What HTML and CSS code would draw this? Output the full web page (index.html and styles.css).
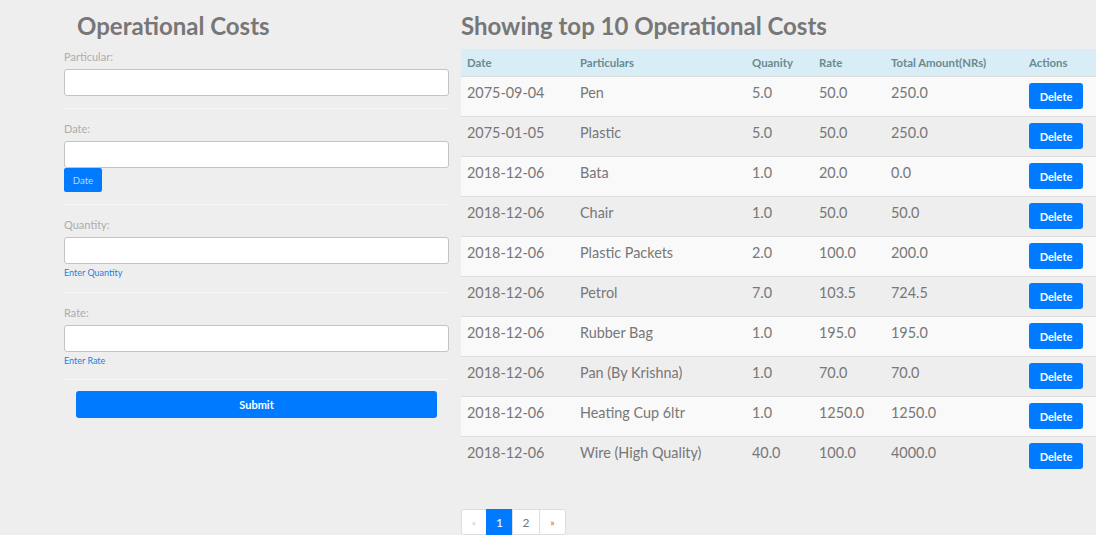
FILE: index.html
```html
<!DOCTYPE html>
<html>
<head>
<meta charset="utf-8">
<link rel="stylesheet" href="styles.css">
</head>
<body>
<div class="page">
  <section class="form-col">
    <h2 class="title title-left">Operational Costs</h2>
    <div class="group first">
      <label class="lbl">Particular:</label>
      <input class="field" type="text">
    </div>
    <hr class="sep">
    <div class="group">
      <label class="lbl">Date:</label>
      <input class="field" type="text">
      <button class="btn-date">Date</button>
    </div>
    <hr class="sep">
    <div class="group">
      <label class="lbl">Quantity:</label>
      <input class="field" type="text">
      <div class="help">Enter Quantity</div>
    </div>
    <hr class="sep after-help">
    <div class="group">
      <label class="lbl">Rate:</label>
      <input class="field" type="text">
      <div class="help">Enter Rate</div>
    </div>
    <hr class="sep">
    <button class="btn-submit">Submit</button>
  </section>
  <section class="table-col">
    <h2 class="title">Showing top 10 Operational Costs</h2>
    <table class="costs">
      <colgroup>
        <col class="c1"><col class="c2"><col class="c3"><col class="c4"><col class="c5"><col class="c6">
      </colgroup>
      <thead>
        <tr><th>Date</th><th>Particulars</th><th>Quanity</th><th>Rate</th><th>Total Amount(NRs)</th><th>Actions</th></tr>
      </thead>
      <tbody>
        <tr><td>2075-09-04</td><td>Pen</td><td>5.0</td><td>50.0</td><td>250.0</td><td class="act"><button class="btn-del">Delete</button></td></tr>
        <tr><td>2075-01-05</td><td>Plastic</td><td>5.0</td><td>50.0</td><td>250.0</td><td class="act"><button class="btn-del">Delete</button></td></tr>
        <tr><td>2018-12-06</td><td>Bata</td><td>1.0</td><td>20.0</td><td>0.0</td><td class="act"><button class="btn-del">Delete</button></td></tr>
        <tr><td>2018-12-06</td><td>Chair</td><td>1.0</td><td>50.0</td><td>50.0</td><td class="act"><button class="btn-del">Delete</button></td></tr>
        <tr><td>2018-12-06</td><td>Plastic Packets</td><td>2.0</td><td>100.0</td><td>200.0</td><td class="act"><button class="btn-del">Delete</button></td></tr>
        <tr><td>2018-12-06</td><td>Petrol</td><td>7.0</td><td>103.5</td><td>724.5</td><td class="act"><button class="btn-del">Delete</button></td></tr>
        <tr><td>2018-12-06</td><td>Rubber Bag</td><td>1.0</td><td>195.0</td><td>195.0</td><td class="act"><button class="btn-del">Delete</button></td></tr>
        <tr><td>2018-12-06</td><td>Pan (By Krishna)</td><td>1.0</td><td>70.0</td><td>70.0</td><td class="act"><button class="btn-del">Delete</button></td></tr>
        <tr><td>2018-12-06</td><td>Heating Cup 6ltr</td><td>1.0</td><td>1250.0</td><td>1250.0</td><td class="act"><button class="btn-del">Delete</button></td></tr>
        <tr><td>2018-12-06</td><td>Wire (High Quality)</td><td>40.0</td><td>100.0</td><td>4000.0</td><td class="act"><button class="btn-del">Delete</button></td></tr>
      </tbody>
    </table>
    <nav class="pager">
      <span class="pg first disabled">&laquo;</span>
      <span class="pg active">1</span>
      <span class="pg two">2</span>
      <span class="pg next">&raquo;</span>
    </nav>
  </section>
</div>
</body>
</html>
```

FILE: styles.css
```css
html, body {
  margin: 0;
  padding: 0;
  background: #eeeeee;
  font-family: Lato, "Liberation Sans", sans-serif;
  color: #777777;
}

.page {
  display: flex;
  gap: 12px;
  padding-left: 64px;
}

.form-col {
  width: 385px;
  display: flex;
  flex-direction: column;
}

.table-col {
  width: 635px;
}

.title {
  font-size: 24px;
  font-weight: bold;
  line-height: 28px;
  margin: 12px 0 0 0;
  color: #777777;
}

.title-left {
  margin-left: 13px;
}

.group {
  display: flex;
  flex-direction: column;
  align-items: flex-start;
  margin-top: 14px;
}

.group.first {
  margin-top: 11px;
}

.lbl {
  font-size: 11px;
  line-height: 12px;
  color: #adadad;
  font-weight: normal;
}

.field {
  box-sizing: border-box;
  width: 385px;
  height: 27px;
  margin: 6px 0 0 0;
  border: 1px solid #c4c4c4;
  border-radius: 3px;
  background: #ffffff;
  padding: 0 8px;
}

.btn-date {
  height: 24px;
  width: 38px;
  padding: 0;
  border: none;
  border-radius: 2px;
  background: #007bff;
  color: #b8d8ff;
  font-family: Lato, "Liberation Sans", sans-serif;
  font-size: 9.6px;
}

.help {
  margin-top: 3px;
  font-size: 9px;
  line-height: 12px;
  color: #1a7fe8;
}

.sep {
  border: none;
  border-top: 1px solid #f5f5f5;
  margin: 12px 0 0 0;
  height: 0;
}

.sep.after-help {
  margin-top: 13px;
}

.btn-submit {
  margin: 11px 12px 0 12px;
  height: 27px;
  border: none;
  border-radius: 3px;
  background: #007bff;
  color: #ffffff;
  font-family: Lato, "Liberation Sans", sans-serif;
  font-weight: bold;
  font-size: 11px;
}

.costs {
  margin-top: 9px;
  width: 635px;
  table-layout: fixed;
  border-collapse: collapse;
}

.c1 { width: 113px; }
.c2 { width: 172px; }
.c3 { width: 67px; }
.c4 { width: 72px; }
.c5 { width: 138px; }
.c6 { width: 73px; }

.costs th {
  background: #d9edf7;
  color: #6a8a90;
  font-size: 11.4px;
  font-weight: bold;
  line-height: 13px;
  text-align: left;
  padding: 7px 6px 7px 6px;
}

.costs td {
  border-top: 1px solid #dddddd;
  padding: 7px 6px 6px 6px;
  font-size: 14.4px;
  line-height: 18px;
  color: #777777;
  vertical-align: top;
  height: 26px;
}

.costs td.act {
  padding-top: 6px;
  padding-bottom: 7px;
}

.costs tbody tr:nth-child(odd) td {
  background: #f9f9f9;
}

.costs tbody tr:nth-child(even) td {
  background: #eeeeee;
}

.btn-del {
  display: block;
  width: 54px;
  height: 26px;
  padding: 0;
  border: none;
  border-radius: 3px;
  background: #007bff;
  color: #ffffff;
  font-family: Lato, "Liberation Sans", sans-serif;
  font-weight: bold;
  font-size: 11px;
}

.pager {
  display: flex;
  margin-top: 33px;
}

.pg {
  box-sizing: border-box;
  height: 26px;
  display: flex;
  align-items: center;
  justify-content: center;
  background: #ffffff;
  border: 1px solid #dddddd;
  margin-left: -1px;
  font-size: 12px;
  color: #777777;
}

.pg.first {
  margin-left: 0;
  width: 26px;
  border-radius: 3px 0 0 3px;
}

.pg.active {
  background: #007bff;
  border-color: #007bff;
  color: #ffffff;
  width: 27px;
}

.pg.two {
  width: 28px;
}

.pg.next {
  width: 27px;
  border-radius: 0 3px 3px 0;
  color: #b06070;
  font-size: 10px;
}

.pg.disabled {
  color: #cccccc;
  font-size: 10px;
}
```
